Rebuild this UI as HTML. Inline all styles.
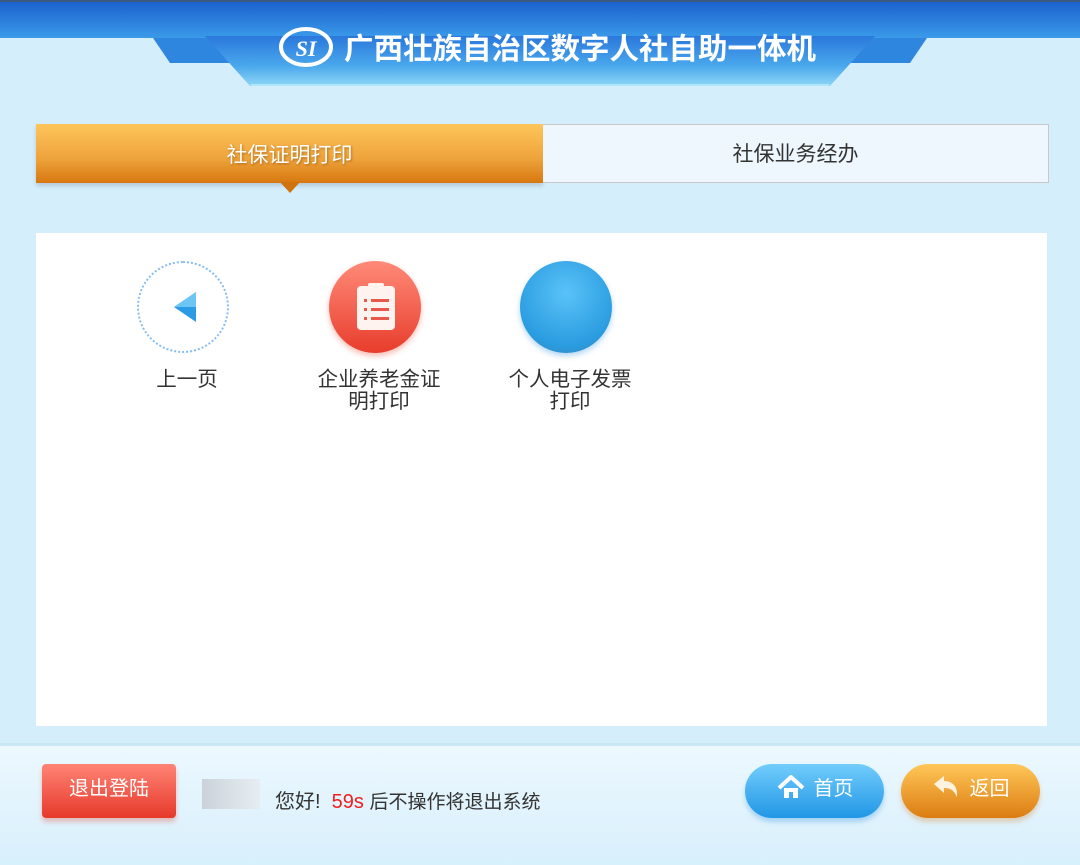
<!DOCTYPE html>
<html><head><meta charset="utf-8"><style>
*{margin:0;padding:0;box-sizing:border-box}
body{width:1080px;height:865px;overflow:hidden;background:#d5eefc;font-family:"Liberation Sans","Noto Sans CJK SC",sans-serif;position:relative}
.abs{position:absolute}
.lbl{position:absolute;width:180px;text-align:center;font-size:20.5px;color:#333;line-height:22px}
.circ{position:absolute;width:92px;height:92px;border-radius:50%}
.btn{position:absolute;height:54px;color:#fff;font-size:20px;text-align:center;line-height:50px}
</style></head><body>
<svg class="abs" style="left:0;top:0" width="1080" height="90">
<defs>
<linearGradient id="hb" x1="0" y1="0" x2="0" y2="1"><stop offset="0" stop-color="#1a5fcc"/><stop offset="1" stop-color="#3a9ae8"/></linearGradient>
<linearGradient id="hc" x1="0" y1="0" x2="0" y2="1"><stop offset="0" stop-color="#2a78dc"/><stop offset="0.6" stop-color="#4aa8ec"/><stop offset="1" stop-color="#8fd6f7"/></linearGradient>
</defs>
<rect width="1080" height="38" fill="url(#hb)"/>
<rect y="0" width="1080" height="2" fill="#3a5a80"/>
<polygon points="153,38 215,38 235,63 170,63" fill="#2f86de"/>
<polygon points="865,38 927,38 910,63 845,63" fill="#2f86de"/>
<polygon points="205,36 875,36 830,86 250,86" fill="url(#hc)"/>
<polygon points="250,84 830,84 828,86 252,86" fill="#aee6fb"/>
<ellipse cx="306" cy="47" rx="25" ry="18" fill="none" stroke="#fff" stroke-width="4"/>
<text x="306" y="56" text-anchor="middle" fill="#fff" font-size="22" font-weight="bold" font-style="italic" font-family="Liberation Serif">SI</text>
<text x="344" y="59" fill="#fff" font-size="29.5" font-weight="bold" font-family="Liberation Sans,Noto Sans CJK SC,sans-serif">广西壮族自治区数字人社自助一体机</text>
</svg>
<div class="abs" style="left:36px;top:124px;width:507px;height:59px;background:linear-gradient(#fec65a,#eda23a 60%,#d7770f);box-shadow:0 3px 4px rgba(0,0,0,.15);color:#fff;font-size:21px;text-align:center;line-height:64px;text-shadow:1px 1px 2px rgba(120,60,0,.5)">社保证明打印</div>
<div class="abs" style="left:280px;top:182px;width:0;height:0;border-left:10px solid transparent;border-right:10px solid transparent;border-top:11px solid #d0730f"></div>
<div class="abs" style="left:543px;top:124px;width:506px;height:59px;background:#eef7fd;border:1px solid #c8c8c8;border-left:none;color:#333;font-size:21px;text-align:center;line-height:60px">社保业务经办</div>
<div class="abs" style="left:36px;top:233px;width:1011px;height:493px;background:#fff"></div>
<div class="circ" style="left:137px;top:261px;border:2px dotted #86bdf2"></div>
<svg class="abs" style="left:172px;top:290px" width="26" height="34"><polygon points="24,2 24,32 2,17" fill="#2b9be6"/><polygon points="24,2 24,17 2,17" fill="#6cc6f5"/></svg>
<div class="circ" style="left:329px;top:261px;background:linear-gradient(#ff8a78,#e83d2c);box-shadow:0 3px 6px rgba(230,60,40,.35)"></div>
<svg class="abs" style="left:355px;top:282px" width="42" height="50"><rect x="2" y="4" width="38" height="44" rx="4" fill="#fff3ef"/><rect x="13" y="1" width="16" height="7" rx="2" fill="#fff3ef"/><g fill="#e8594a"><rect x="9" y="17" width="3" height="3"/><rect x="16" y="17" width="18" height="3"/><rect x="9" y="26" width="3" height="3"/><rect x="16" y="26" width="18" height="3"/><rect x="9" y="35" width="3" height="3"/><rect x="16" y="35" width="18" height="3"/></g></svg>
<div class="circ" style="left:520px;top:261px;background:radial-gradient(circle at 50% 35%,#5ac2f8,#2a9ce0 70%,#3a80b0);box-shadow:0 3px 6px rgba(40,140,220,.35)"></div>
<div class="lbl" style="left:97px;top:369px">上一页</div>
<div class="lbl" style="left:289px;top:369px">企业养老金证<br>明打印</div>
<div class="lbl" style="left:480px;top:369px">个人电子发票<br>打印</div>
<div class="abs" style="left:0;top:743px;width:1080px;height:122px;background:linear-gradient(#ecf8fe,#d8effc);border-top:3px solid #c7e6f6"></div>
<div class="btn" style="left:42px;top:764px;width:134px;border-radius:4px;background:linear-gradient(#ff8476,#e6392a);box-shadow:0 4px 5px rgba(230,60,40,.3)">退出登陆</div>
<div class="abs" style="left:202px;top:779px;width:58px;height:30px;background:linear-gradient(90deg,#c4c9d0,#d6dbe0,#e6ebf0);opacity:.8"></div>
<div class="abs" style="left:275px;top:785px;font-size:20px;color:#333;white-space:nowrap">您好!&nbsp;&nbsp;<span style="color:#f02020">59s</span> <span style="font-size:19px">后不操作将退出系统</span></div>
<div class="btn" style="left:745px;top:764px;width:139px;border-radius:27px;background:linear-gradient(#72cdfb,#2197e6);box-shadow:0 4px 5px rgba(30,140,230,.3)"><svg width="30" height="24" style="vertical-align:-4px;margin-right:8px"><path d="M3 13 L15 2 L27 13" fill="none" stroke="#fff" stroke-width="4" stroke-linejoin="round"/><path d="M8 13 V23 H13 V17 H17 V23 H22 V13" fill="#fff"/></svg>首页</div>
<div class="btn" style="left:901px;top:764px;width:139px;border-radius:27px;background:linear-gradient(#ffc758,#dc7c12);box-shadow:0 4px 5px rgba(220,120,20,.3)"><svg width="28" height="24" style="vertical-align:-4px;margin-right:10px"><path d="M2 9 L12 1 V6 C20 6 26 11 25 22 C22 15 18 13 12 13 V18 Z" fill="#fff3e0"/></svg>返回</div>
</body></html>
